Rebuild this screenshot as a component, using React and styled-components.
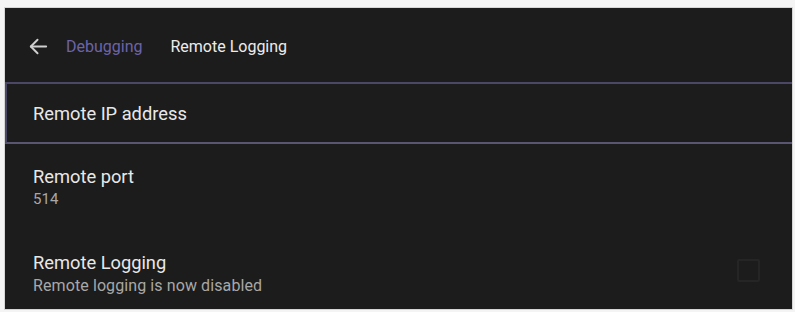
import React from "react";
import styled, { createGlobalStyle } from "styled-components";

const Global = createGlobalStyle`
  html, body { margin: 0; padding: 0; background: #f4f4f4; }
  body { font-family: Roboto, "Noto Sans", sans-serif; }
`;

const Frame = styled.div`
  width: 795px;
  height: 312px;
  padding: 8px 3px 3px 5px;
  box-sizing: border-box;
`;

const Panel = styled.div`
  width: 787px;
  height: 301px;
  background: #1c1c1c;
  display: flex;
  flex-direction: column;
  box-shadow: 0 0 0 1px #d6d6d6;
  overflow: hidden;
`;

const Header = styled.div`
  height: 74px;
  flex: none;
  display: flex;
  align-items: center;
  padding: 2px 0 0 22px;
  box-sizing: border-box;
`;

const Back = styled.svg`
  width: 23px;
  height: 23px;
  margin-right: 16px;
`;

const Crumb = styled.span`
  font-size: 16px;
  color: ${(p) => (p.$active ? "#ececec" : "#6c64aa")};
  margin-right: ${(p) => (p.$active ? "0" : "28px")};
`;

const Row = styled.div`
  flex: none;
  display: flex;
  align-items: center;
  justify-content: space-between;
  padding: ${(p) => p.$pt || 0}px 28px 0 28px;
  box-sizing: border-box;
  height: ${(p) => p.$h}px;
  ${(p) =>
    p.$focused &&
    `
    border-top: 2px solid #4b4766;
    border-bottom: 2px solid #5a5672;
    border-left: 2px solid #4b4766;
    padding-left: 26px;
  `}
`;

const Texts = styled.div`
  display: flex;
  flex-direction: column;
  gap: 3px;
`;

const Title = styled.div`
  font-size: 18.3px;
  color: #e8e8e8;
`;

const Sub = styled.div`
  font-size: ${(p) => p.$size || 16}px;
  color: #a8a8a8;
  letter-spacing: 0.1px;
`;

const Check = styled.div`
  width: 19px;
  height: 19px;
  border: 2px solid #252525;
  border-radius: 2px;
  margin-right: 4px;
  margin-top: -6px;
`;

export default function App() {
  return (
    <>
      <Global />
      <Frame>
        <Panel>
          <Header>
            <Back viewBox="0 0 24 24" fill="none" stroke="#cfcfcf" strokeWidth="2" strokeLinecap="round" strokeLinejoin="round">
              <path d="M20 12H4" />
              <path d="M11 5l-7 7 7 7" />
            </Back>
            <Crumb>Debugging</Crumb>
            <Crumb $active>Remote Logging</Crumb>
          </Header>
          <Row $focused $h={62}>
            <Title>Remote IP address</Title>
          </Row>
          <Row $h={86} $pt={0}>
            <Texts>
              <Title>Remote port</Title>
              <Sub $size={15}>514</Sub>
            </Texts>
          </Row>
          <Row $h={79} $pt={8}>
            <Texts>
              <Title>Remote Logging</Title>
              <Sub>Remote logging is now disabled</Sub>
            </Texts>
            <Check />
          </Row>
        </Panel>
      </Frame>
    </>
  );
}
